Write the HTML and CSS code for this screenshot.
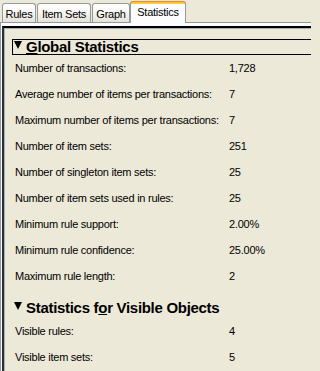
FILE: index.html
```html
<!DOCTYPE html>
<html>
<head>
<meta charset="utf-8">
<link rel="stylesheet" href="styles.css">
</head>
<body>
<div class="tabs">
  <div class="tab tab-rules">Rules</div>
  <div class="tab tab-items">Item Sets</div>
  <div class="tab tab-graph">Graph</div>
  <div class="tab tab-active">Statistics</div>
</div>
<div class="panel">
  <div class="client">
    <div class="section">
      <div class="header focused">
        <svg class="tri" width="8" height="8" viewBox="0 0 8 8"><polygon points="0,0 8,0 4,8" fill="#000"/></svg>
        <span><u>G</u>lobal Statistics</span>
      </div>
      <div class="rows">
        <div class="row"><span>Number of transactions:</span><span>1,728</span></div>
        <div class="row"><span>Average number of items per transactions:</span><span>7</span></div>
        <div class="row"><span>Maximum number of items per transactions:</span><span>7</span></div>
        <div class="row"><span>Number of item sets:</span><span>251</span></div>
        <div class="row"><span>Number of singleton item sets:</span><span>25</span></div>
        <div class="row"><span>Number of item sets used in rules:</span><span>25</span></div>
        <div class="row"><span>Minimum rule support:</span><span>2.00%</span></div>
        <div class="row"><span>Minimum rule confidence:</span><span>25.00%</span></div>
        <div class="row"><span>Maximum rule length:</span><span>2</span></div>
      </div>
    </div>
    <div class="section section-second">
      <div class="header">
        <svg class="tri" width="8" height="8" viewBox="0 0 8 8"><polygon points="0,0 8,0 4,8" fill="#000"/></svg>
        <span>Statistics f<u>o</u>r Visible Objects</span>
      </div>
      <div class="rows">
        <div class="row"><span>Visible rules:</span><span>4</span></div>
        <div class="row"><span>Visible item sets:</span><span>5</span></div>
      </div>
    </div>
  </div>
</div>
</body>
</html>
```

FILE: styles.css
```css
html, body {
  margin: 0;
  padding: 0;
}
body {
  width: 311px;
  height: 371px;
  overflow: hidden;
  background: #ECE9D8;
  color: #000;
  font-family: "Liberation Sans", Arial, sans-serif;
  font-size: 11px;
}

/* ---------- tab strip ---------- */
.tabs {
  display: flex;
  align-items: flex-end;
  height: 23px;
  box-sizing: border-box;
  padding-left: 2px;
  border-bottom: 1px solid #919B9C;
}
.tab {
  box-sizing: border-box;
  height: 19px;
  padding-top: 2px;
  line-height: 16px;
  text-align: center;
  white-space: nowrap;
  letter-spacing: -0.25px;
  border: 1px solid #919B9C;
  border-bottom: 0;
  border-radius: 3px 3px 0 0;
  background: linear-gradient(#FFFFFF, #F4F3EE 55%, #E4E2D9);
  margin-right: 1px;
}
.tab-rules { width: 34px; }
.tab-items { width: 54px; }
.tab-graph { width: 38px; margin-right: 0; }
.tab-active {
  width: 56px;
  height: 22px;
  margin-bottom: -1px;
  padding-top: 2px;
  padding-bottom: 3px;
  border-top: 1px solid #E68B2C;
  background: linear-gradient(#FFC83C 0, #FFC83C 2px, #FCFCFE 2px);
}

/* ---------- panel ---------- */
.panel {
  display: flex;
  flex-direction: column;
  height: 348px;
  box-sizing: border-box;
  border-left: 1px solid #919B9C;
  padding: 3px 0 0 1px;
  background: #FCFCFE;
}
.client {
  flex: 1;
  border-top: 2px solid #000;
  border-left: 2px solid #2B2E3A;
  box-shadow: inset 1px 1px 0 #A4AFBB;
  background: #ECE9D8;
  padding: 11px 0 0 8px;
}

/* ---------- sections ---------- */
.header {
  display: flex;
  align-items: flex-start;
  gap: 4px;
  height: 16px;
  box-sizing: border-box;
  border: 1px solid transparent;
  border-right: 0;
  padding-left: 1px;
  font-weight: bold;
  font-size: 15px;
  line-height: 14px;
  letter-spacing: -0.3px;
  white-space: nowrap;
}
.header.focused {
  border-color: #000;
}
.tri {
  flex: none;
  margin-top: 1px;
}
.row {
  display: grid;
  grid-template-columns: 214px auto;
  height: 26px;
  line-height: 26px;
  padding-left: 3px;
  letter-spacing: -0.25px;
  white-space: nowrap;
}
.section-second {
  margin-top: 11px;
}
.section-second .rows {
  margin-top: 2px;
}
```
